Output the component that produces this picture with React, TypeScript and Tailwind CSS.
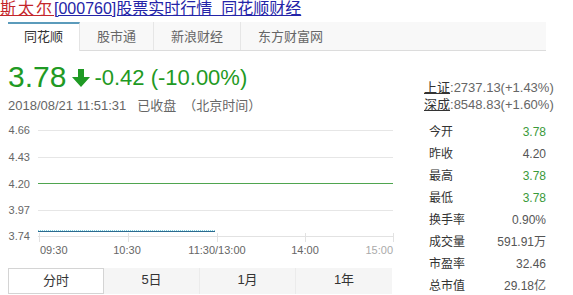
import React from "react";

const FONT = '"Liberation Sans", Arial, "Noto Sans CJK SC", sans-serif';

function DownArrow() {
  return (
    <svg width="18" height="18" viewBox="0 0 18 18" className="shrink-0">
      <path d="M6 0 H12 V8 H18 L9 18 L0 8 H6 Z" fill="#1f9a24" />
    </svg>
  );
}

function Chart() {
  const grid = [10, 37, 90];
  const yLabels: [string, number][] = [
    ["4.66", 10],
    ["4.43", 37],
    ["4.20", 63.5],
    ["3.97", 90],
    ["3.74", 116],
  ];
  const ticks = [31, 120, 209, 297, 385];
  return (
    <svg width="392" height="142" viewBox="0 0 392 142" style={{ fontFamily: FONT }}>
      {grid.map((y) => (
        <line key={y} x1="30" x2="385" y1={y + 0.5} y2={y + 0.5} stroke="#e6e6e6" strokeWidth="1" />
      ))}
      <line x1="30" x2="385" y1="63.5" y2="63.5" stroke="#4fa54f" strokeWidth="1" />
      <line x1="30" x2="385" y1="116.5" y2="116.5" stroke="#e2e2e2" strokeWidth="1" />
      {ticks.map((x) => (
        <line key={x} x1={x + 0.5} x2={x + 0.5} y1="113" y2="122" stroke="#e2e2e2" strokeWidth="1" />
      ))}
      <line x1="30" x2="207" y1="110.5" y2="110.5" stroke="#7fd0e0" strokeWidth="1" strokeDasharray="1 1" />
      <line x1="30" x2="207" y1="111.5" y2="111.5" stroke="#2c6a8e" strokeWidth="1" />
      {yLabels.map(([t, y]) => (
        <text key={t} x="22" y={y + 4} textAnchor="end" fontSize="11" fill="#666">
          {t}
        </text>
      ))}
      <text x="32" y="134" fontSize="11" fill="#666">09:30</text>
      <text x="119" y="134" fontSize="11" fill="#666" textAnchor="middle">10:30</text>
      <text x="209" y="134" fontSize="11" fill="#666" textAnchor="middle">11:30/13:00</text>
      <text x="297" y="134" fontSize="11" fill="#666" textAnchor="middle">14:00</text>
      <text x="385" y="134" fontSize="11" fill="#aaa" textAnchor="end">15:00</text>
    </svg>
  );
}

const stats: [string, string, boolean][] = [
  ["今开", "3.78", true],
  ["昨收", "4.20", false],
  ["最高", "3.78", true],
  ["最低", "3.78", true],
  ["换手率", "0.90%", false],
  ["成交量", "591.91万", false],
  ["市盈率", "32.46", false],
  ["总市值", "29.18亿", false],
];

export default function App() {
  return (
    <div
      className="w-[573px] h-[295px] overflow-hidden bg-white text-[#333]"
      style={{ fontFamily: FONT }}
    >
      <div className="h-[22px] text-[16px] leading-[17px] whitespace-nowrap">
        <span className="text-[#c4262b] underline tracking-[2px]">斯太尔</span>
        <span className="text-[#2424a8] underline">[000760]股票实时行情&nbsp;&nbsp;同花顺财经</span>
      </div>

      <div className="ml-[8px] w-[538px] h-[29px] flex bg-[#f8f8f8] border-b border-[#dcdcdc] text-[13px] leading-[26px]">
        <div className="h-[29px] px-[16px] bg-white border-t-2 border-t-[#5b9bbb] border-r border-r-[#e4e4e4] text-[#333]">
          同花顺
        </div>
        <div className="h-[28px] px-[17px] pt-[2px] text-[#666] border-r border-[#e6e6e6]">股市通</div>
        <div className="h-[28px] px-[17px] pt-[2px] text-[#666] border-r border-[#e6e6e6]">新浪财经</div>
        <div className="h-[28px] px-[17px] pt-[2px] text-[#666]">东方财富网</div>
      </div>

      <div className="flex">
        <div className="ml-[8px] w-[392px]">
          <div className="mt-[10px] flex items-center h-[32px] text-[#1f9a24]">
            <span className="text-[30px] leading-[32px]">3.78</span>
            <span className="ml-[6px] mt-[2px]">
              <DownArrow />
            </span>
            <span className="ml-[4px] text-[22px] leading-[32px] mt-[1px]">-0.42 (-10.00%)</span>
          </div>
          <div className="mt-[5px] text-[13px] leading-[16px] text-[#666] whitespace-nowrap">
            2018/08/21 11:51:31&nbsp;&nbsp;&nbsp;已收盘&nbsp;&nbsp;（北京时间）
          </div>
          <div className="mt-[6px] h-[142px]">
            <Chart />
          </div>
          <div className="mt-[6px] w-[384px] h-[26px] flex text-[13px] leading-[24px] text-[#333] bg-[#f5f5f5]">
            <div className="w-[96px] text-center bg-white border border-[#d4d4d4]">分时</div>
            <div className="w-[96px] text-center border-r border-[#ebebeb]">5日</div>
            <div className="w-[96px] text-center border-r border-[#ebebeb]">1月</div>
            <div className="w-[96px] text-center">1年</div>
          </div>
        </div>

        <div className="ml-[24px] w-[122px] text-[13px]">
          <div className="mt-[28px] leading-[17px] whitespace-nowrap text-[#666]">
            <span className="text-[#333] underline">上证</span>:2737.13(+1.43%)
          </div>
          <div className="leading-[17px] whitespace-nowrap text-[#666]">
            <span className="text-[#333] underline">深成</span>:8548.83(+1.60%)
          </div>
          <div className="mt-[8px] pl-[5px]">
            {stats.map(([k, v, g]) => (
              <div key={k} className="h-[22px] flex items-center justify-between">
                <span className="text-[12px] text-[#333]">{k}</span>
                <span className={"text-[12px] " + (g ? "text-[#3a9a3a]" : "text-[#555]")}>{v}</span>
              </div>
            ))}
          </div>
        </div>
      </div>
    </div>
  );
}
